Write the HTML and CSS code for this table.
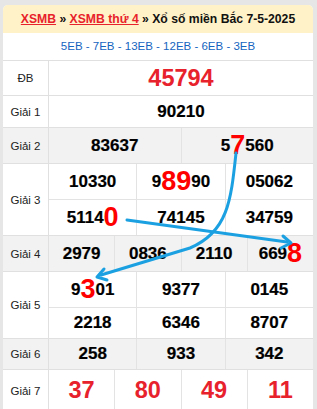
FILE: index.html
```html
<!DOCTYPE html>
<html lang="vi">
<head>
<meta charset="utf-8">
<title>XSMB 7-5-2025</title>
<link rel="stylesheet" href="styles.css">
</head>
<body>
<div class="card">
  <div class="title"><a class="lnk" href="#">XSMB</a> » <a class="lnk" href="#">XSMB thứ 4</a> » Xổ số miền Bắc 7-5-2025</div>
  <div class="codes">5EB - 7EB - 13EB - 12EB - 6EB - 3EB</div>

  <div class="row h-db">
    <div class="lbl">ĐB</div>
    <div class="nums c1"><div class="cell big">45794</div></div>
  </div>

  <div class="row h-g1">
    <div class="lbl">Giải 1</div>
    <div class="nums c1"><div class="cell">90210</div></div>
  </div>

  <div class="row h-g2 alt">
    <div class="lbl">Giải 2</div>
    <div class="nums c2"><div class="cell">83637</div><div class="cell">5<span class="hl">7</span>560</div></div>
  </div>

  <div class="row h-g3">
    <div class="lbl">Giải 3</div>
    <div class="nums c3 g3rows">
      <div class="cell">10330</div><div class="cell">9<span class="hl">89</span>90</div><div class="cell">05062</div>
      <div class="cell">5114<span class="hl">0</span></div><div class="cell">74145</div><div class="cell">34759</div>
    </div>
  </div>

  <div class="row h-g4 alt">
    <div class="lbl">Giải 4</div>
    <div class="nums c4"><div class="cell">2979</div><div class="cell">0836</div><div class="cell">2110</div><div class="cell">669<span class="hl">8</span></div></div>
  </div>

  <div class="row h-g5">
    <div class="lbl">Giải 5</div>
    <div class="nums c3 g5rows">
      <div class="cell">9<span class="hl">3</span>01</div><div class="cell">9377</div><div class="cell">0145</div>
      <div class="cell">2218</div><div class="cell">6346</div><div class="cell">8707</div>
    </div>
  </div>

  <div class="row h-g6 alt">
    <div class="lbl">Giải 6</div>
    <div class="nums c3"><div class="cell">258</div><div class="cell">933</div><div class="cell">342</div></div>
  </div>

  <div class="row h-g7">
    <div class="lbl">Giải 7</div>
    <div class="nums c4"><div class="cell red">37</div><div class="cell red">80</div><div class="cell red">49</div><div class="cell red">11</div></div>
  </div>
</div>

<svg class="arrows" width="317" height="409" viewBox="0 0 317 409" aria-hidden="true">
  <path d="M236 153 C231 200 228 232 190 248 L101 275" />
  <path d="M107 280 L97 277 L104 269" />
  <path d="M127 220 L287 242" />
  <path d="M281 248 L291 243 L283 236" />
</svg>
</body>
</html>
```
FILE: styles.css
```css
* { box-sizing: border-box; }

html, body {
  margin: 0;
  padding: 0;
}

body {
  background: #e6e6e6;
  font-family: "Liberation Sans", Arial, sans-serif;
  color: #111;
  position: relative;
  height: 409px;
  overflow: hidden;
}

.card {
  margin: 5px 4px 0 3px;
  background: #fff;
  border-radius: 5px 5px 0 0;
  overflow: hidden;
}

.title {
  height: 28px;
  line-height: 28px;
  background: #fff2c8;
  text-align: center;
  font-weight: bold;
  font-size: 12.2px;
  color: #111;
  white-space: nowrap;
}

.lnk {
  color: #e8222a;
  text-decoration: underline;
}

.codes {
  height: 28px;
  line-height: 27px;
  text-align: center;
  font-size: 11.5px;
  color: #1565c0;
  border-bottom: 1px solid #e0e0e0;
}

.row {
  display: grid;
  grid-template-columns: 46px 1fr;
  border-bottom: 1px solid #e0e0e0;
  background: #fff;
}

.row.alt { background: #f2f2f2; }

.h-db { height: 35px; }
.h-g1 { height: 32px; }
.h-g2 { height: 36px; }
.h-g3 { height: 72px; }
.h-g4 { height: 36px; }
.h-g5 { height: 67px; }
.h-g6 { height: 31px; }
.h-g7 { height: 42px; }

.lbl {
  display: flex;
  align-items: center;
  justify-content: center;
  border-right: 1px solid #e0e0e0;
  font-size: 11.5px;
  color: #222;
}

.nums {
  display: grid;
  gap: 1px;
  background: #e3e3e3;
}

.c1 { grid-template-columns: 1fr; }
.c2 { grid-template-columns: repeat(2, 1fr); }
.c3 { grid-template-columns: repeat(3, 1fr); }
.c4 { grid-template-columns: repeat(4, 1fr); }

.g3rows { grid-template-rows: 35px 35px; }
.g5rows { grid-template-rows: 35px 30px; }

.cell {
  display: flex;
  align-items: center;
  justify-content: center;
  background: #fff;
  font-weight: bold;
  font-size: 17px;
  color: #000;
  white-space: nowrap;
  -webkit-text-stroke: 0.2px #000;
}

.alt .cell { background: #f2f2f2; }

.cell.big,
.cell.red {
  font-size: 23.5px;
  color: #e8222d;
  -webkit-text-stroke: 0;
}

.hl {
  color: #ff0000;
  font-size: 27px;
  -webkit-text-stroke: 0;
}

.arrows {
  position: absolute;
  top: 0;
  left: 0;
  pointer-events: none;
  fill: none;
  stroke: #1ba1e2;
  stroke-width: 3;
  stroke-linecap: round;
  stroke-linejoin: round;
}
```
